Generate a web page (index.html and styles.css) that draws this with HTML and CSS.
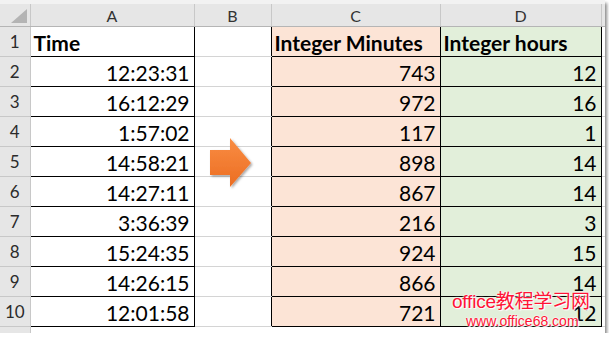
FILE: index.html
```html
<!DOCTYPE html>
<html>
<head>
<meta charset="utf-8">
<link rel="stylesheet" href="styles.css">
</head>
<body>
<div class="sheet">
  <table class="grid">
    <colgroup>
      <col class="c-rh"><col class="c-a"><col class="c-b"><col class="c-c"><col class="c-d"><col class="c-e">
    </colgroup>
    <tr class="hdr">
      <th class="corner"><span class="tri"></span></th>
      <th>A</th><th>B</th><th>C</th><th>D</th><th class="last"></th>
    </tr>
    <tr>
      <td class="rn">1</td><td class="a bold left">Time</td><td class="b"></td><td class="c bold left">Integer Minutes</td><td class="d bold left">Integer hours</td><td class="e"></td>
    </tr>
    <tr><td class="rn">2</td><td class="a">12:23:31</td><td class="b"></td><td class="c">743</td><td class="d">12</td><td class="e"></td></tr>
    <tr><td class="rn">3</td><td class="a">16:12:29</td><td class="b"></td><td class="c">972</td><td class="d">16</td><td class="e"></td></tr>
    <tr><td class="rn">4</td><td class="a">1:57:02</td><td class="b"></td><td class="c">117</td><td class="d">1</td><td class="e"></td></tr>
    <tr><td class="rn">5</td><td class="a">14:58:21</td><td class="b"></td><td class="c">898</td><td class="d">14</td><td class="e"></td></tr>
    <tr><td class="rn">6</td><td class="a">14:27:11</td><td class="b"></td><td class="c">867</td><td class="d">14</td><td class="e"></td></tr>
    <tr><td class="rn">7</td><td class="a">3:36:39</td><td class="b"></td><td class="c">216</td><td class="d">3</td><td class="e"></td></tr>
    <tr><td class="rn">8</td><td class="a">15:24:35</td><td class="b"></td><td class="c">924</td><td class="d">15</td><td class="e"></td></tr>
    <tr><td class="rn">9</td><td class="a">14:26:15</td><td class="b"></td><td class="c">866</td><td class="d">14</td><td class="e"></td></tr>
    <tr><td class="rn">10</td><td class="a">12:01:58</td><td class="b"></td><td class="c">721</td><td class="d">12</td><td class="e"></td></tr>
    <tr><td class="rn"></td><td class="b"></td><td class="b"></td><td class="b"></td><td class="b"></td><td class="e"></td></tr>
  </table>
  <svg class="arrow" width="50" height="60" viewBox="0 0 50 60">
    <defs>
      <linearGradient id="og" x1="0" y1="0" x2="0" y2="1">
        <stop offset="0" stop-color="#f98d43"/>
        <stop offset="1" stop-color="#ec6d22"/>
      </linearGradient>
      <filter id="sh" x="-20%" y="-20%" width="150%" height="150%">
        <feDropShadow dx="1.5" dy="1.5" stdDeviation="1.2" flood-color="#000" flood-opacity="0.35"/>
      </filter>
    </defs>
    <path d="M2 14 H22 V2 L43 27 L22 51 V39 H2 Z" fill="url(#og)" filter="url(#sh)"/>
  </svg>
  <div class="mark">
    <div class="mark1">office教程学习网</div>
    <div class="mark2">www.office68.com</div>
  </div>
</div>
</body>
</html>
```

FILE: styles.css
```css
html, body {
  margin: 0;
  padding: 0;
  background: #ffffff;
}
.sheet {
  position: relative;
  width: 605px;
  height: 333px;
  overflow: hidden;
  background: #f2f2f2;
  box-shadow: 2px 3px 3px rgba(0,0,0,0.45);
  padding-top: 4px;
  box-sizing: border-box;
}
.grid {
  border-collapse: collapse;
  table-layout: fixed;
  width: 621px;
  font-family: Lato, "Liberation Sans", sans-serif;
  font-size: 21px;
  color: #000;
}
.c-rh { width: 30px; }
.c-a { width: 164px; }
.c-b { width: 77px; }
.c-c { width: 169px; }
.c-d { width: 161px; }
.c-e { width: 20px; }
.hdr th {
  height: 22px;
  padding: 0;
  background: #e6e6e6;
  font-weight: normal;
  font-size: 16px;
  color: #333;
  border-right: 1px solid #c8c8c8;
  border-bottom: 1px solid #b5b5b5;
  vertical-align: middle;
  text-align: center;
}
.hdr th.last { border-right: none; }
.corner { position: relative; }
.tri {
  position: absolute;
  right: 3px;
  bottom: 3px;
  width: 0;
  height: 0;
  border-left: 16px solid transparent;
  border-bottom: 14px solid #b4b4b4;
}
td {
  height: 28px;
  padding: 0 4px 1px 4px;
  vertical-align: bottom;
  line-height: 25px;
  text-align: right;
  white-space: nowrap;
  overflow: hidden;
  background: #fff;
  border: 1px solid #d4d4d4;
}
td.rn {
  height: 29px;
  background: #e6e6e6;
  text-align: center;
  font-size: 17px;
  color: #2b2b2b;
  border-left: none;
  border-right: 1px solid #c8c8c8;
  border-bottom: 1px solid #c8c8c8;
  vertical-align: middle;
  padding: 0;
}
td.a { border: 1px solid #000; }
td.b { border-left: none; border-right: none; }
td.c { border: 1px solid #000; background: #fce4d6; }
td.d { border: 1px solid #000; background: #e2efda; }
td.e { border-left: none; border-right: none; }
td.bold { font-weight: bold; }
td.left { text-align: left; padding-left: 3px; }
.arrow {
  position: absolute;
  left: 208px;
  top: 136px;
}
.mark {
  position: absolute;
  left: 452px;
  top: 290px;
  color: #ff1436;
  font-family: "Liberation Sans", "Noto Sans CJK SC", sans-serif;
  text-shadow: 0 0 2px #fff, 0 0 2px #fff, 1px 1px 1px #fff;
}
.mark1 {
  font-size: 19px;
  line-height: 23px;
  letter-spacing: -0.2px;
}
.mark2 {
  font-size: 14px;
  line-height: 16px;
  margin-left: 14px;
}
```
